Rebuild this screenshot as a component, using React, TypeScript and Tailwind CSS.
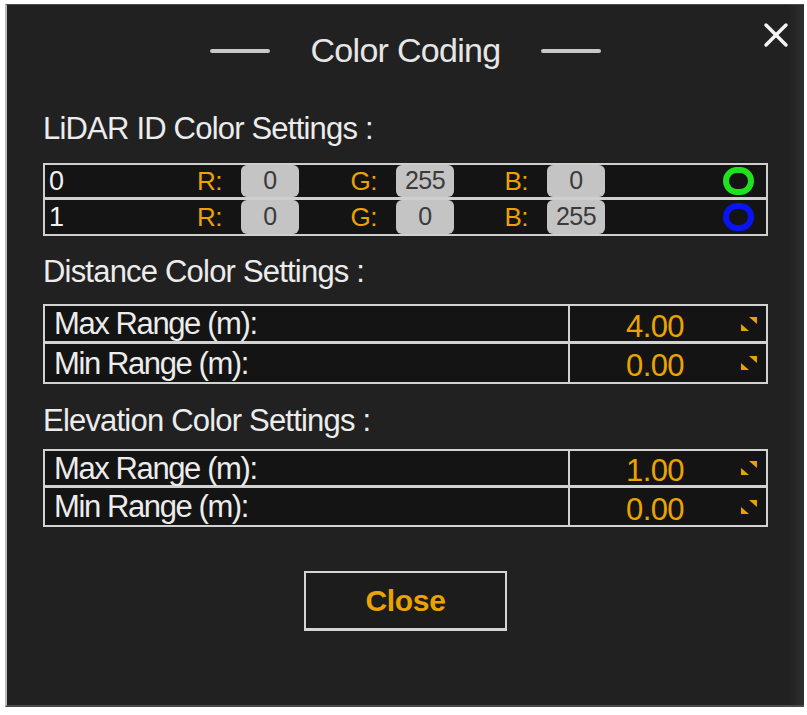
import React from "react";

type IdRow = { id: string; r: string; g: string; b: string; ring: string };

const idRows: IdRow[] = [
  { id: "0", r: "0", g: "255", b: "0", ring: "#20e020" },
  { id: "1", r: "0", g: "0", b: "255", ring: "#0a14f0" },
];

function SpinHandle() {
  return (
    <svg width="18" height="16" viewBox="0 0 18 16" className="shrink-0">
      <polygon points="9,1 17,1 17,8" fill="#e8a200" />
      <polygon points="1,8 1,15 9,15" fill="#e8a200" />
    </svg>
  );
}

function ValueBox({ value }: { value: string }) {
  return (
    <div className="flex h-full w-[58px] items-center justify-center rounded-[6px] bg-[#c4c4c4] text-[25px] tracking-[-0.5px] text-[#3a3a3a]">
      {value}
    </div>
  );
}

function ChannelLabel({ label, width }: { label: string; width: string }) {
  return (
    <div className={`flex h-full items-center justify-end pr-[19px] text-[26px] tracking-[-0.5px] text-[#eaa300] ${width}`}>
      {label}
    </div>
  );
}

function IdColorRow({ row, last }: { row: IdRow; last: boolean }) {
  return (
    <div className={`flex items-stretch bg-[#141414] ${last ? "h-[34px]" : "h-[35px] border-b-[3px] border-[#cfcfcf]"}`}>
      <div className="flex w-[196px] items-center justify-between">
        <span className="pl-[4px] text-[27px] text-[#f0f0f0]">{row.id}</span>
        <span className="pr-[19px] text-[26px] tracking-[-0.5px] text-[#eaa300]">R:</span>
      </div>
      <ValueBox value={row.r} />
      <ChannelLabel label="G:" width="w-[97px]" />
      <ValueBox value={row.g} />
      <ChannelLabel label="B:" width="w-[93px]" />
      <ValueBox value={row.b} />
      <div className="flex flex-1 items-center justify-end pr-[12px]">
        <div className="h-[28px] w-[31px] rounded-full border-[6px]" style={{ borderColor: row.ring }} />
      </div>
    </div>
  );
}

function RangeTable({ max, min, tall }: { max: string; min: string; tall: boolean }) {
  const rowH = tall ? "h-[38px]" : "h-[37px]";
  const rows = [
    { label: "Max Range (m):", value: max },
    { label: "Min Range (m):", value: min },
  ];
  return (
    <div className="w-[725px] border-2 border-[#d2d2d2]">
      {rows.map((r, i) => (
        <div
          key={r.label}
          className={`flex bg-[#141414] ${rowH} ${i === 0 ? "border-b-[3px] border-[#d2d2d2]" : ""}`}
        >
          <div className="flex w-[523px] items-center pl-[9px] text-[31px] leading-none tracking-[-1.4px] text-[#ececec]">
            {r.label}
          </div>
          <div className="flex flex-1 items-center border-l-2 border-[#d2d2d2]">
            <span className="w-[170px] pt-[5px] text-center text-[31px] leading-none tracking-[-0.6px] text-[#eaa300]">
              {r.value}
            </span>
            <SpinHandle />
          </div>
        </div>
      ))}
    </div>
  );
}

export default function App() {
  return (
    <div className="h-[715px] w-[807px] bg-white pl-[5px] pt-[4px] font-['Liberation_Sans',Arial,sans-serif]">
      <div className="relative h-[703px] w-[799px] border-b-2 border-l-2 border-t border-[#4a4a4a] border-l-[#bdbdbd] bg-[#212121] pl-[36px]">
        <div className="pointer-events-none absolute right-0 top-0 h-full w-[16px] bg-gradient-to-r from-[#212121] to-[#2e2e2e]" />

        <button className="absolute right-[14px] top-[16px] text-[#f4f4f4]">
          <svg width="28" height="28" viewBox="0 0 28 28">
            <path d="M4 4 L24 24 M24 4 L4 24" stroke="currentColor" strokeWidth="3.5" strokeLinecap="round" />
          </svg>
        </button>

        <div className="flex h-[91px] w-[725px] items-center justify-center gap-[40px]">
          <div className="h-[4px] w-[60px] rounded-full bg-[#c8c8c8]" />
          <h1 className="text-[34px] tracking-[-0.7px] text-[#e6e6e6]">Color Coding</h1>
          <div className="h-[4px] w-[60px] rounded-full bg-[#c8c8c8]" />
        </div>

        <div className="flex h-[67px] items-center text-[31px] tracking-[-0.8px] text-[#ececec]">LiDAR ID Color Settings :</div>
        <div className="w-[725px] border-2 border-[#cfcfcf]">
          {idRows.map((row, i) => (
            <IdColorRow key={row.id} row={row} last={i === idRows.length - 1} />
          ))}
        </div>

        <div className="flex h-[68px] items-center pt-[4px] text-[31px] tracking-[-0.8px] text-[#ececec]">Distance Color Settings :</div>
        <RangeTable max="4.00" min="0.00" tall />

        <div className="flex h-[65px] items-center pt-[9px] text-[31px] tracking-[-0.8px] text-[#ececec]">Elevation Color Settings :</div>
        <RangeTable max="1.00" min="0.00" tall={false} />

        <div className="mt-[44px] flex w-[725px] justify-center">
          <button className="flex h-[60px] w-[203px] items-center justify-center border-2 border-b-[3px] border-[#d4d4d4] bg-[#1c1c1c] text-[30px] font-bold tracking-[-0.3px] text-[#eaa300]">
            Close
          </button>
        </div>
      </div>
    </div>
  );
}
